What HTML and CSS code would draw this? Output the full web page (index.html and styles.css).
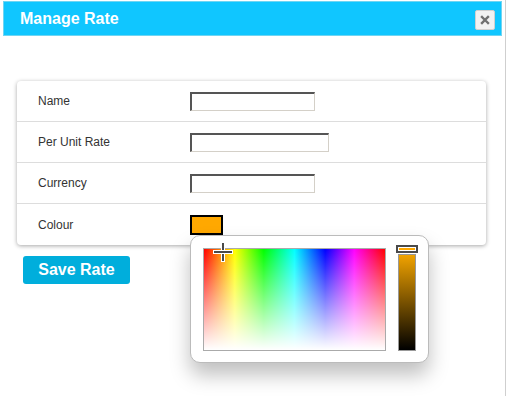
FILE: index.html
```html
<!DOCTYPE html>
<html lang="en">
<head>
    <meta charset="UTF-8">
    <title>Manage Rate</title>
    <link rel="stylesheet" href="styles.css">
</head>
<body>
    <div class="dialog">
        <!-- header -->
        <div class="dialog-header">
            <h2 class="dialog-title">Manage Rate</h2>
            <button class="close-btn" title="Close">
                <svg width="10" height="10" viewBox="0 0 10 10">
                    <path d="M2 2 L8 8 M8 2 L2 8" stroke="#707070" stroke-width="2.4" stroke-linecap="square"/>
                </svg>
            </button>
        </div>

        <!-- form -->
        <div class="dialog-body">
            <div class="rate-card">
                <div class="form-row">
                    <label class="form-label">Name</label>
                    <input type="text" class="form-input">
                </div>
                <div class="form-row">
                    <label class="form-label">Per Unit Rate</label>
                    <input type="text" class="form-input wide">
                </div>
                <div class="form-row">
                    <label class="form-label">Currency</label>
                    <input type="text" class="form-input">
                </div>
                <div class="form-row">
                    <label class="form-label">Colour</label>
                    <div class="colour-field">
                        <span class="colour-swatch"></span>
                        <!-- colour picker popup -->
                        <div class="picker">
                            <div class="picker-area">
                                <span class="cross cross-v"></span>
                                <span class="cross cross-h"></span>
                            </div>
                            <div class="picker-slider">
                                <span class="slider-handle"></span>
                            </div>
                        </div>
                    </div>
                </div>
            </div>
            <button class="save-btn">Save Rate</button>
        </div>
    </div>
</body>
</html>
```

FILE: styles.css
```css
:root {
    --header-blue: #10c6ff;
    --button-blue: #00aedc;
    --text-color: #333333;
    --row-line: #dddddd;
    --swatch: #ffa800;
}
body {
    margin: 0;
    font-family: "Liberation Sans", Arial, sans-serif;
    background: #ffffff;
    color: var(--text-color);
}
.dialog {
    width: 506px;
    min-height: 396px;
    border-right: 1px solid #cfcfcf;
    box-sizing: border-box;
    padding-top: 1px;
}
/* header */
.dialog-header {
    margin-left: 3px;
    width: 499px;
    height: 35px;
    box-sizing: border-box;
    background: var(--header-blue);
    border: 1px solid #6fd5f2;
    display: flex;
    align-items: center;
    justify-content: space-between;
    padding: 0 6px 0 16px;
}
.dialog-title {
    margin: 0;
    font-size: 16px;
    font-weight: bold;
    color: #ffffff;
}
.close-btn {
    width: 20px;
    height: 20px;
    padding: 0;
    background: #f2f2f2;
    border: 1px solid #d0d0d0;
    border-radius: 2px;
    display: grid;
    place-items: center;
    margin-top: 3px;
}
/* form card */
.dialog-body {
    padding: 45px 0 0 17px;
}
.rate-card {
    width: 469px;
    background: #ffffff;
    border-radius: 4px;
    box-shadow: 0 1px 4px rgba(0, 0, 0, 0.35);
}
.form-row {
    display: grid;
    grid-template-columns: 152px 1fr;
    align-items: center;
    height: 41px;
    box-sizing: border-box;
    padding-left: 21px;
    border-bottom: 1px solid var(--row-line);
}
.form-row:last-child {
    border-bottom: none;
}
.form-label {
    font-size: 12px;
}
.form-input {
    width: 125px;
    height: 19px;
    box-sizing: border-box;
    padding: 0 2px;
    border-style: solid;
    border-width: 2px 1px 1px 2px;
    border-color: #555555 #d4d0c8 #d4d0c8 #555555;
    background: #ffffff;
}
.form-input.wide {
    width: 139px;
}
/* colour picker */
.colour-field {
    position: relative;
    width: 33px;
    height: 20px;
}
.colour-swatch {
    display: block;
    width: 33px;
    height: 20px;
    box-sizing: border-box;
    border: 2px solid #000000;
    background: var(--swatch);
}
.picker {
    position: absolute;
    left: 0;
    top: 20px;
    width: 239px;
    height: 128px;
    box-sizing: border-box;
    background: #ffffff;
    border: 1px solid #bbbbbb;
    border-radius: 10px;
    box-shadow: 0 12px 20px rgba(0, 0, 0, 0.25);
    display: flex;
    align-items: flex-start;
    gap: 12px;
    padding: 12px 0 0 12px;
    z-index: 10;
}
.picker-area {
    position: relative;
    width: 183px;
    height: 103px;
    box-sizing: border-box;
    border: 1px solid #aaaaaa;
    background:
        linear-gradient(to bottom, rgba(255, 255, 255, 0) 0%, #ffffff 100%),
        linear-gradient(to right, #ff0000 0%, #ffff00 17%, #00ff00 33%, #00ffff 50%, #0000ff 67%, #ff00ff 83%, #ff0000 100%);
}
.cross {
    position: absolute;
    background: #4a4a4a;
    border: 1px solid #ffffff;
}
.cross-v {
    left: 17px;
    top: -7px;
    width: 2px;
    height: 18px;
}
.cross-h {
    left: 9px;
    top: 1px;
    width: 18px;
    height: 2px;
}
.picker-slider {
    position: relative;
    width: 18px;
    height: 97px;
    margin-top: 6px;
    box-sizing: border-box;
    border: 1px solid #999999;
    background: linear-gradient(to bottom, #f0a200 0%, #000000 100%);
}
.slider-handle {
    position: absolute;
    left: -3px;
    top: -10px;
    width: 22px;
    height: 8px;
    box-sizing: border-box;
    border: 2px solid #4a4a4a;
    background: var(--swatch);
    box-shadow: inset 0 0 0 1px #ffffff;
}
/* save button */
.save-btn {
    margin: 11px 0 0 6px;
    width: 107px;
    height: 28px;
    border: none;
    border-radius: 3px;
    background: var(--button-blue);
    color: #ffffff;
    font-family: "Liberation Sans", Arial, sans-serif;
    font-size: 16px;
    font-weight: bold;
}
```
